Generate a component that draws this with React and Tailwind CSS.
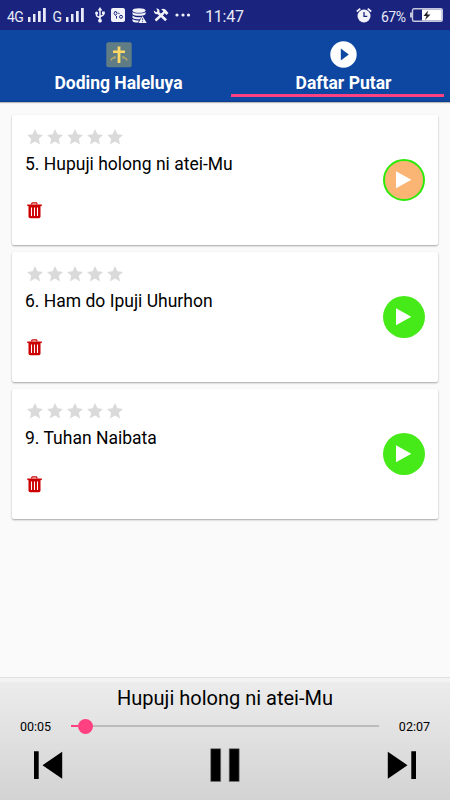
const songs = [
    { id: 5, title: 'Hupuji holong ni atei-Mu', playing: true },
    { id: 6, title: 'Ham do Ipuji Uhurhon', playing: false },
    { id: 9, title: 'Tuhan Naibata', playing: false },
];

function Signal({ className }) {
    return (
        <svg className={className} width="18" height="14" viewBox="0 0 18 14" fill="#e8eaf6">
            <rect x="0" y="9" width="2.5" height="5" />
            <rect x="5" y="6" width="2.5" height="8" />
            <rect x="10" y="3" width="2.7" height="11" />
            <rect x="15" y="0" width="2.8" height="14" />
        </svg>
    );
}

function StatusBar() {
    return (
        <div className="flex h-[30px] items-center bg-[#1a237e] pl-[7px] pr-[7px] text-[#e8eaf6]">
            <span className="w-[21px] pt-[4px] text-[14px] leading-none tracking-[-0.5px]">4G</span>
            <Signal className="shrink-0" />
            <span className="ml-[6.5px] w-[13.5px] pt-[4px] text-[14px] leading-none">G</span>
            <Signal className="shrink-0" />

            {/* usb */}
            <svg className="ml-[10.5px] shrink-0" width="10" height="16" viewBox="0 0 10 16" fill="none" stroke="#f2f3fa" strokeWidth="1.5">
                <path d="M5 2v11M1.5 6v2.5c0 1.3 3.5 1.2 3.5 3M8.5 6v1.5c0 1.3-3.5 1.2-3.5 3" />
                <path d="M5 0l2.3 3.5H2.7z" fill="#f2f3fa" stroke="none" />
                <circle cx="5" cy="13.7" r="1.9" fill="#f2f3fa" stroke="none" />
                <circle cx="1.6" cy="6" r="1.5" fill="#f2f3fa" stroke="none" />
                <rect x="7" y="4.5" width="2.8" height="2.8" fill="#f2f3fa" stroke="none" />
            </svg>

            {/* app notification */}
            <svg className="ml-[6px] shrink-0" width="14" height="14" viewBox="0 0 14 14">
                <rect width="14" height="14" rx="2" fill="#f2f3fa" />
                <g fill="none" stroke="#1a237e" strokeWidth="1">
                    <path d="M4.5 3l1.5 2.5-1.5 2L3 5.5z" />
                    <path d="M5.5 8v2.500M7 4.500l1.500 1.500" />
                    <circle cx="10" cy="8.800" r="1.500" />
                </g>
            </svg>

            {/* storage warning */}
            <svg className="ml-[7px] shrink-0" width="15" height="15" viewBox="0 0 15 15">
                <ellipse cx="7" cy="2.500" rx="6.500" ry="2.300" fill="#f2f3fa" />
                <path d="M.5 4c2 2 11 2 13 0v2.300c-2 2-11 2-13 0zM.5 7.500c2 2 7 2 9 1.500L8 11.300C4 11.300 1.500 10.800.5 9.800zM.5 11c1.500 1.300 4 1.500 6.500 1.500L6 14.500C3 14.500 1 14 .5 13zM10.500 8l4.200 7H6.500z" fill="#f2f3fa" />
                <path d="M10.600 10.300v2M10.600 13.200v1" stroke="#1a237e" strokeWidth=".8" />
            </svg>

            {/* developer tools */}
            <svg className="ml-[6px] shrink-0" width="16" height="14" viewBox="0 0 16 14" fill="#f2f3fa">
                <path d="M.8 2.600L3.200 4.200 4.500 3 3.200.6C5.500.3 7 2 6.400 4.300L14 11.200 12.200 13.300 4.800 6.200C2.500 6.600.6 5 .8 2.600z" />
                <path d="M10 5.500L2.500 12.500" stroke="#f2f3fa" strokeWidth="2.400" />
                <path d="M8 1.200C10.300.1 12.300.8 13.500 2.700L15.500 5 13.500 7 11.700 5.300 10 7 8.300 5.500 10.300 3.600C9.800 2.400 9 1.700 8 1.200z" />
            </svg>

            <svg className="ml-[6.5px] shrink-0" width="16" height="4" viewBox="0 0 16 4" fill="#f2f3fa">
                <circle cx="2" cy="2" r="1.600" />
                <circle cx="8" cy="2" r="1.600" />
                <circle cx="13.500" cy="2" r="1.600" />
            </svg>

            <span className="ml-[14px] pt-[3px] text-[16px] leading-none tracking-[-0.2px]">11:47</span>

            <svg className="ml-auto shrink-0" width="16" height="15" viewBox="0 0 16 15">
                <circle cx="8" cy="8" r="6.500" fill="#f2f3fa" />
                <path d="M.8 3.500L4.300.7M15.200 3.500L11.700.7" stroke="#f2f3fa" strokeWidth="1.700" />
                <path d="M8 4v4.300h3.300" stroke="#1a237e" strokeWidth="1.300" fill="none" />
            </svg>
            <span className="ml-[9px] w-[29px] pt-[3px] text-[14px] leading-none tracking-[-0.5px]">67%</span>
            <svg className="shrink-0" width="33" height="14" viewBox="0 0 33 14">
                <rect x="0" y="4.500" width="2" height="5" fill="#c5c8dd" />
                <rect x="2.500" y=".7" width="29.800" height="12.600" rx="1.500" fill="#1a237e" stroke="#c5c8dd" strokeWidth="1.400" />
                <rect x="12" y="1.500" width="19.700" height="11" fill="#fff" />
                <path d="M18 2.500l-4.500 5.500h3l-1.500 4 5.500-5.500h-3.300z" fill="#222" />
            </svg>
        </div>
    );
}

function Tabs() {
    return (
        <div className="grid h-[72px] grid-cols-[231px_213px] border-b border-[#0b3d8c] bg-[#0d47a1] text-[17.5px] font-bold text-white shadow-[0_1px_1px_rgba(0,0,0,0.25)]">
            <div className="flex flex-col items-center pl-[6px] pt-[11.5px]">
                <svg width="26" height="26" viewBox="0 0 26 26">
                    <rect x=".3" y=".3" width="25.400" height="25" rx="2" fill="#607d86" />
                    <g fill="none" stroke="#b9a965" strokeWidth="1.300">
                        <path d="M5 18.500c.5-2.500 2.500-3 4.500-2.500M6.500 16.500l3-2.200M21 18.500c-.5-2.500-2.500-3-4.500-2.500M19.500 16.500l-3-2.200" />
                    </g>
                    <path d="M11.600 4.500h2.800v4h4.600v2.500h-4.600v10h-2.800v-10H7v-2.500h4.600z" fill="#ffd966" />
                </svg>
                <span className="mt-[3px] leading-[24px]">Doding Haleluya</span>
            </div>
            <div className="flex flex-col items-center pt-[11px]">
                <svg className="ml-[12px]" width="27" height="27" viewBox="0 0 27 27">
                    <circle cx="13.500" cy="13.500" r="13.200" fill="#fff" />
                    <path d="M10.800 7.500v12l8-6z" fill="#0d47a1" />
                </svg>
                <span className="ml-[12px] mt-[3px] leading-[24px]">Daftar Putar</span>
                <div className="-mt-[1px] h-[3px] w-full shrink-0 bg-[#ff4081]" />
            </div>
        </div>
    );
}

function Stars() {
    return (
        <div className="flex gap-[4px]">
            {[1, 2, 3, 4, 5].map((n) => (
                <svg key={n} width="16" height="16" viewBox="0 0 16 16" fill="#dadada">
                    <path d="M8 0l2.450 5.350 5.550.55-4.200 3.800 1.250 5.800L8 12.500l-5.050 3 1.250-5.800L0 5.900l5.550-.55z" />
                </svg>
            ))}
        </div>
    );
}

function SongCard({ song }) {
    return (
        <div className="flex h-[130px] items-center justify-between rounded-[2px] bg-white pl-[13px] pr-[13px] shadow-[0_1px_2px_rgba(0,0,0,0.35)]">
            <div className="h-full pt-[14px]">
                <div className="pl-[2px]">
                    <Stars />
                </div>
                <h3 className="mt-[7px] text-[17.5px] leading-[24px] text-black">
                    {song.id}. {song.title}
                </h3>
                <button type="button" className="ml-[2px] mt-[26px] block">
                    <svg width="16" height="17" viewBox="0 0 16 17">
                        <path d="M4.700 2.500V1.700Q4.700.9 5.500.9h3.600q.8 0 .8.800v.8" fill="none" stroke="#cc0000" strokeWidth="1.200" />
                        <path d="M.3 2.500h14.500v1.600H.3z" fill="#cc0000" />
                        <path d="M1.500 4h12v10.500q0 1.700-1.700 1.700H3.200Q1.500 16.200 1.500 14.500z" fill="#cc0000" />
                        <path d="M4.500 5.500v8.500M7.500 5.500v8.500M10.500 5.500v8.500" stroke="#fff" strokeWidth="1.100" />
                    </svg>
                </button>
            </div>
            <button type="button">
                <svg width="42" height="42" viewBox="0 0 42 42">
                    {song.playing ? (
                        <circle cx="21" cy="21" r="20" fill="#fab574" stroke="#2eea0a" strokeWidth="2" />
                    ) : (
                        <circle cx="21" cy="21" r="21" fill="#46ea19" />
                    )}
                    <path d="M13 12.200v17l15.300-8.500z" fill="#fff" />
                </svg>
            </button>
        </div>
    );
}

function Player() {
    return (
        <div className="h-[123px] border-t border-[#e0e0e0] bg-[#f3f3f3] pt-[4px]">
            <div className="h-full bg-linear-to-b from-[#ececec] to-[#d3d3d3]">
                <p className="pt-[3px] text-center text-[20px] leading-[26px] text-black">Hupuji holong ni atei-Mu</p>
                <div className="mt-[7px] flex h-[16px] items-center pl-[20px] pr-[20px] text-[12.5px] leading-none text-black">
                    <span className="w-[51px] pt-[2px]">00:05</span>
                    <div className="flex flex-1 items-center">
                        <div className="h-[2px] w-[7px] bg-[#ff4081]" />
                        <div className="size-[15px] rounded-full bg-[#ff4081]" />
                        <div className="h-[2px] flex-1 bg-[#bcbcbc]" />
                    </div>
                    <span className="w-[51px] pt-[2px] text-right">02:07</span>
                </div>
                <div className="mt-[14px] flex items-center justify-between px-[34px]">
                    <svg width="29" height="28" viewBox="0 0 29 28">
                        <path d="M0 .3h4.700v27.700H0zM28.200.7v27L8.500 14.200z" />
                    </svg>
                    <svg width="30" height="34" viewBox="0 0 30 34">
                        <path d="M.7.700h10v32.800H.7zM19.200.7h10v32.800h-10z" stroke="#777" strokeWidth=".6" />
                    </svg>
                    <svg width="29" height="28" viewBox="0 0 29 28">
                        <path d="M24.300.3H29V28h-4.700zM.8.7v27L20.500 14.200z" />
                    </svg>
                </div>
            </div>
        </div>
    );
}

export default function App() {
    return (
        <div className="flex h-[800px] w-[450px] flex-col overflow-hidden bg-[#fafafa] font-['Roboto',sans-serif]">
            <StatusBar />
            <Tabs />
            <main className="flex flex-1 flex-col gap-[7px] px-[12px] pt-[13px]">
                {songs.map((song) => (
                    <SongCard key={song.id} song={song} />
                ))}
            </main>
            <Player />
        </div>
    );
}
